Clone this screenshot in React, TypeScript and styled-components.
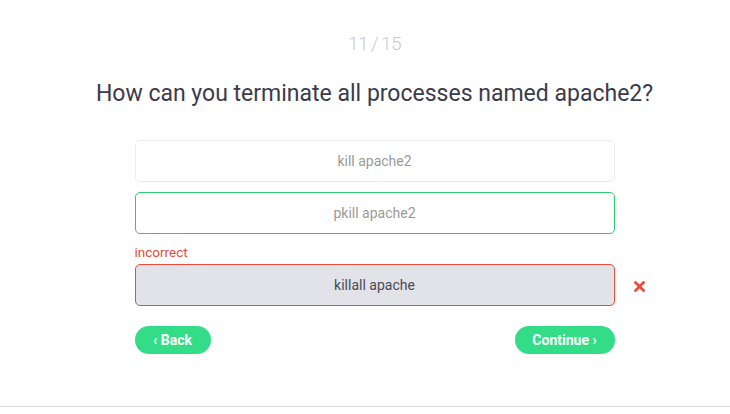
import React from "react";
import styled, { createGlobalStyle } from "styled-components";

const Global = createGlobalStyle`
  html, body { margin: 0; padding: 0; background: #fff; }
  body { font-family: "Roboto", "Liberation Sans", sans-serif; }
  * { box-sizing: border-box; }
`;

const Page = styled.div`
  height: 407px;
  border-bottom: 1px solid #d3d8d3;
  display: flex;
  flex-direction: column;
  align-items: center;
  padding: 32px 0 0 19px;
`;

const Counter = styled.div`
  font-size: 19px;
  color: #c9c9cd;
  line-height: 24px;
  font-weight: 300;
  letter-spacing: -0.6px;
  word-spacing: -1px;
`;

const Question = styled.h1`
  margin: 24px 0 0;
  font-weight: 400;
  font-size: 23px;
  line-height: 28px;
  color: #3b3b4b;
`;

const Column = styled.div`
  width: 480px;
`;

const Options = styled(Column)`
  margin-top: 32px;
  display: flex;
  flex-direction: column;
  gap: 10px;
`;

const Group = styled.div`
  position: relative;
  display: flex;
  flex-direction: column;
`;

const Label = styled.div`
  font-size: 13.5px;
  line-height: 16px;
  color: #e74c3c;
  margin-bottom: 4px;
`;

type Variant = "default" | "correct" | "wrong";

const Option = styled.div<{ $v: Variant }>`
  height: 42px;
  border-radius: 5px;
  display: flex;
  align-items: center;
  justify-content: center;
  font-size: 14px;
  border: 1px solid
    ${(p) => (p.$v === "correct" ? "#2ecc71" : p.$v === "wrong" ? "#e74c3c" : "#ececec")};
  background: ${(p) => (p.$v === "wrong" ? "#e2e3e8" : "#fff")};
  color: ${(p) => (p.$v === "wrong" ? "#4a4a55" : "#9a9a9a")};
`;

const Mark = styled.span`
  position: absolute;
  right: -30px;
  bottom: 14px;
  line-height: 0;
`;

const Nav = styled(Column)`
  margin-top: 20px;
  display: flex;
  justify-content: space-between;
`;

const Btn = styled.button<{ $w: number }>`
  width: ${(p) => p.$w}px;
  height: 28px;
  border: none;
  border-radius: 14px;
  background: #33dd88;
  color: #fff;
  font-family: "Roboto", "Liberation Sans", sans-serif;
  font-weight: 700;
  font-size: 14px;
  padding: 0;
  cursor: pointer;
`;

export default function App() {
  return (
    <>
      <Global />
      <Page>
        <Counter>11 / 15</Counter>
        <Question>How can you terminate all processes named apache2?</Question>
        <Options>
          <Option $v="default">kill apache2</Option>
          <Option $v="correct">pkill apache2</Option>
          <Group>
            <Label>incorrect</Label>
            <Option $v="wrong">killall apache</Option>
            <Mark>
              <svg width="11" height="11" viewBox="0 0 11 11">
                <path d="M1.5 1.5 L9.5 9.5 M9.5 1.5 L1.5 9.5" stroke="#e74c3c" strokeWidth="2.8" strokeLinecap="round" />
              </svg>
            </Mark>
          </Group>
        </Options>
        <Nav>
          <Btn $w={76}>‹ Back</Btn>
          <Btn $w={100}>Continue ›</Btn>
        </Nav>
      </Page>
    </>
  );
}
